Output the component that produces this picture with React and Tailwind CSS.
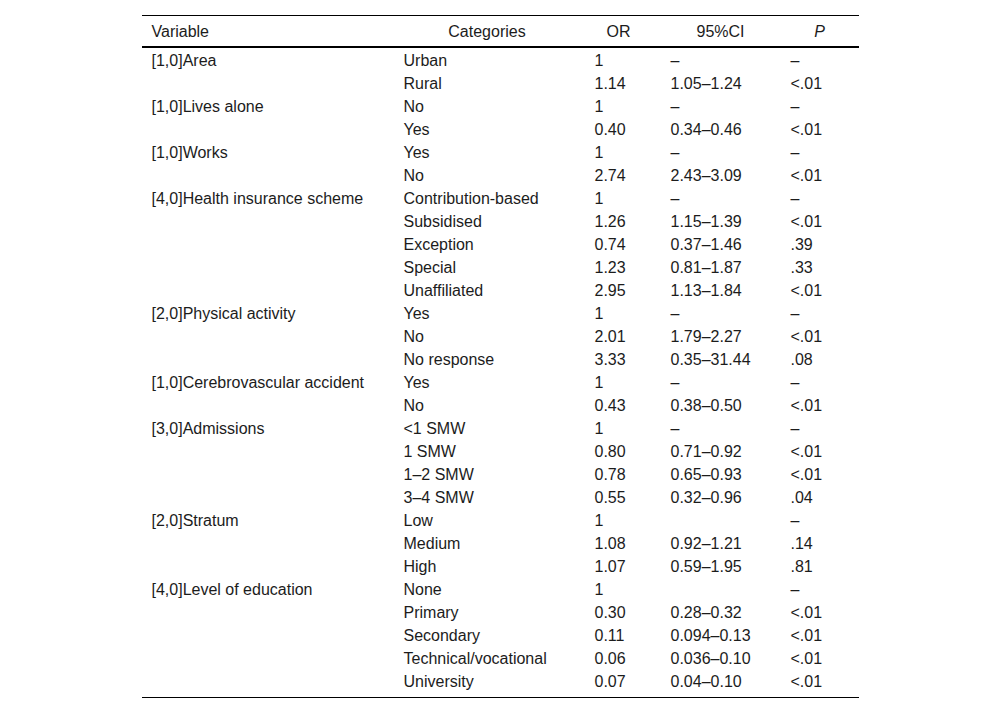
const groups = [
  ['[1,0]Area', [['Urban', '1', '–', '–'], ['Rural', '1.14', '1.05–1.24', '<.01']]],
  ['[1,0]Lives alone', [['No', '1', '–', '–'], ['Yes', '0.40', '0.34–0.46', '<.01']]],
  ['[1,0]Works', [['Yes', '1', '–', '–'], ['No', '2.74', '2.43–3.09', '<.01']]],
  [
    '[4,0]Health insurance scheme',
    [
      ['Contribution-based', '1', '–', '–'],
      ['Subsidised', '1.26', '1.15–1.39', '<.01'],
      ['Exception', '0.74', '0.37–1.46', '.39'],
      ['Special', '1.23', '0.81–1.87', '.33'],
      ['Unaffiliated', '2.95', '1.13–1.84', '<.01'],
    ],
  ],
  [
    '[2,0]Physical activity',
    [
      ['Yes', '1', '–', '–'],
      ['No', '2.01', '1.79–2.27', '<.01'],
      ['No response', '3.33', '0.35–31.44', '.08'],
    ],
  ],
  ['[1,0]Cerebrovascular accident', [['Yes', '1', '–', '–'], ['No', '0.43', '0.38–0.50', '<.01']]],
  [
    '[3,0]Admissions',
    [
      ['<1 SMW', '1', '–', '–'],
      ['1 SMW', '0.80', '0.71–0.92', '<.01'],
      ['1–2 SMW', '0.78', '0.65–0.93', '<.01'],
      ['3–4 SMW', '0.55', '0.32–0.96', '.04'],
    ],
  ],
  [
    '[2,0]Stratum',
    [
      ['Low', '1', '', '–'],
      ['Medium', '1.08', '0.92–1.21', '.14'],
      ['High', '1.07', '0.59–1.95', '.81'],
    ],
  ],
  [
    '[4,0]Level of education',
    [
      ['None', '1', '', '–'],
      ['Primary', '0.30', '0.28–0.32', '<.01'],
      ['Secondary', '0.11', '0.094–0.13', '<.01'],
      ['Technical/vocational', '0.06', '0.036–0.10', '<.01'],
      ['University', '0.07', '0.04–0.10', '<.01'],
    ],
  ],
]

const cols = 'grid grid-cols-[252px_191px_76px_120px_78px]'

export default function App() {
  const rows = []
  groups.forEach(([label, items]) => {
    items.forEach((it, i) => rows.push([i === 0 ? label : '', ...it]))
  })

  return (
    <div className="min-h-[714px] bg-white pt-[15px] font-['Liberation_Sans',Arial,sans-serif] text-[16px] text-[#1c1c1c]">
      <div className="mx-auto w-[717px] border-t border-b border-black pb-[5px]">
        {/* header */}
        <div className={`${cols} h-[32px] items-center border-b-2 border-black pt-px`}>
          <div className="pl-[10px]">Variable</div>
          <div className="pr-[4px] text-center">Categories</div>
          <div className="pr-[8px] text-center">OR</div>
          <div className="text-center">95%CI</div>
          <div className="text-center italic">P</div>
        </div>

        {rows.map((r, i) => (
          <div key={i} className={`${cols} h-[23px] items-center pt-px`}>
            {r.map((c, j) => (
              <div key={j} className="whitespace-nowrap pl-[10px]">
                {c}
              </div>
            ))}
          </div>
        ))}
      </div>
    </div>
  )
}
